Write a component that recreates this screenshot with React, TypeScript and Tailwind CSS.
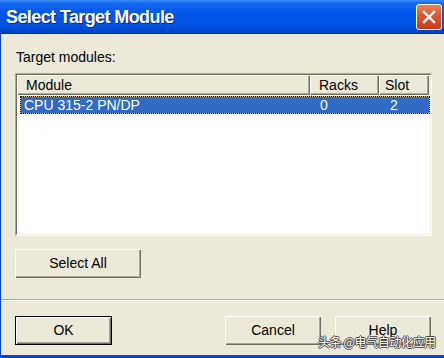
import React from "react";

const font = { fontFamily: '"Liberation Sans", Arial, sans-serif' };

function Btn({ label, w, isDefault }: { label: string; w: string; isDefault?: boolean }) {
  if (isDefault) {
    return (
      <div className={`${w} h-[29px] border border-black bg-[#ECE9D8]`}>
        <div className="w-full h-full flex items-center justify-center text-[14px] text-black shadow-[inset_1px_1px_0_#ffffff,inset_-1px_-1px_0_#716F64,inset_-2px_-2px_0_#ACA899]">
          {label}
        </div>
      </div>
    );
  }
  return (
    <div className={`${w} h-[29px] flex items-center justify-center text-[14px] text-black bg-[#ECE9D8] shadow-[inset_1px_1px_0_#ffffff,inset_-1px_-1px_0_#716F64,inset_-2px_-2px_0_#ACA899]`}>
      {label}
    </div>
  );
}

function HeaderCell({ label, w, pl }: { label: string; w: string; pl: string }) {
  return (
    <div className={`${w} ${pl} h-[20px] flex items-center text-[14px] text-black bg-[#ECE9D8] shadow-[inset_1px_1px_0_#ffffff,inset_-1px_-1px_0_#716F64,inset_-2px_-2px_0_#ACA899]`}>
      {label}
    </div>
  );
}

export default function App() {
  return (
    <div className="relative w-[444px] h-[358px] flex flex-col bg-[#0842D3] overflow-hidden" style={font}>
      {/* Title bar */}
      <div className="h-[34px] flex items-start justify-between bg-[linear-gradient(180deg,#3C8EF9_0%,#1668F0_10%,#0058EC_35%,#0053E2_75%,#0046CC_92%,#0036B0_100%)]">
        <div className="pl-[6px] pt-[7px] text-[18px] leading-[20px] font-bold text-white tracking-[-0.6px] [text-shadow:1px_1px_0_#0A2A8C]">
          Select Target Module
        </div>
        <div className="mt-[4px] mr-[2px] w-[26px] h-[26px] rounded-[3px] border border-white bg-[linear-gradient(180deg,#E8845F_0%,#E0552F_45%,#C83A1A_100%)] flex items-center justify-center">
          <svg width="14" height="14" viewBox="0 0 14 14">
            <path d="M2 2 L12 12 M12 2 L2 12" stroke="#ffffff" strokeWidth="2.4" strokeLinecap="square" />
          </svg>
        </div>
      </div>

      {/* Body */}
      <div className="flex-1 ml-[1px] mb-[3px] bg-[#ECE9D8] flex flex-col">
        <div className="mt-[15px] ml-[15px] text-[14px] leading-[16px] text-black">Target modules:</div>

        {/* List view */}
        <div className="mt-[8px] ml-[14px] w-[417px] h-[163px] border-t border-l border-[#ACA899] border-r border-b border-r-white border-b-white">
          <div className="w-full h-full border-t border-l border-[#716F64] border-r border-b border-r-[#F1EFE2] border-b-[#F1EFE2] bg-white flex flex-col">
            <div className="flex">
              <HeaderCell label="Module" w="w-[293px]" pl="pl-[9px]" />
              <HeaderCell label="Racks" w="w-[69px]" pl="pl-[9px]" />
              <HeaderCell label="Slot" w="w-[50px]" pl="pl-[6px]" />
              <div className="flex-1 h-[20px] bg-[#ECE9D8]" />
            </div>
            <div className="mt-[1px] ml-[3px] h-[18px] border border-dotted border-black bg-[#D6C07E]">
              <div className="w-full h-full bg-[#316AC5] flex items-center text-[14px] text-white">
                <div className="w-[290px] pl-[3px]">CPU 315-2 PN/DP</div>
                <div className="w-[69px] pl-[9px]">0</div>
                <div className="pl-[10px]">2</div>
              </div>
            </div>
          </div>
        </div>

        <div className="mt-[13px] ml-[14px]">
          <Btn label="Select All" w="w-[126px]" />
        </div>

        <div className="mt-[21px] h-[1px] bg-[#ACA899]" />
        <div className="h-[1px] bg-white" />

        <div className="mt-[15px] ml-[14px] flex">
          <Btn label="OK" w="w-[97px]" isDefault />
          <div className="ml-[113px]">
            <Btn label="Cancel" w="w-[96px]" />
          </div>
          <div className="ml-[14px]">
            <Btn label="Help" w="w-[96px]" />
          </div>
        </div>
      </div>

      {/* Watermark */}
      <div
        className="absolute left-[318px] top-[334px] text-[12px] leading-[15px] tracking-[-0.4px] text-white whitespace-nowrap [text-shadow:1px_0_0_#444,-1px_0_0_#444,0_1px_0_#444,0_-1px_0_#444]"
        style={{ fontFamily: '"Noto Sans CJK SC", sans-serif' }}
      >
        头条 @电气自动化应用
      </div>
    </div>
  );
}
